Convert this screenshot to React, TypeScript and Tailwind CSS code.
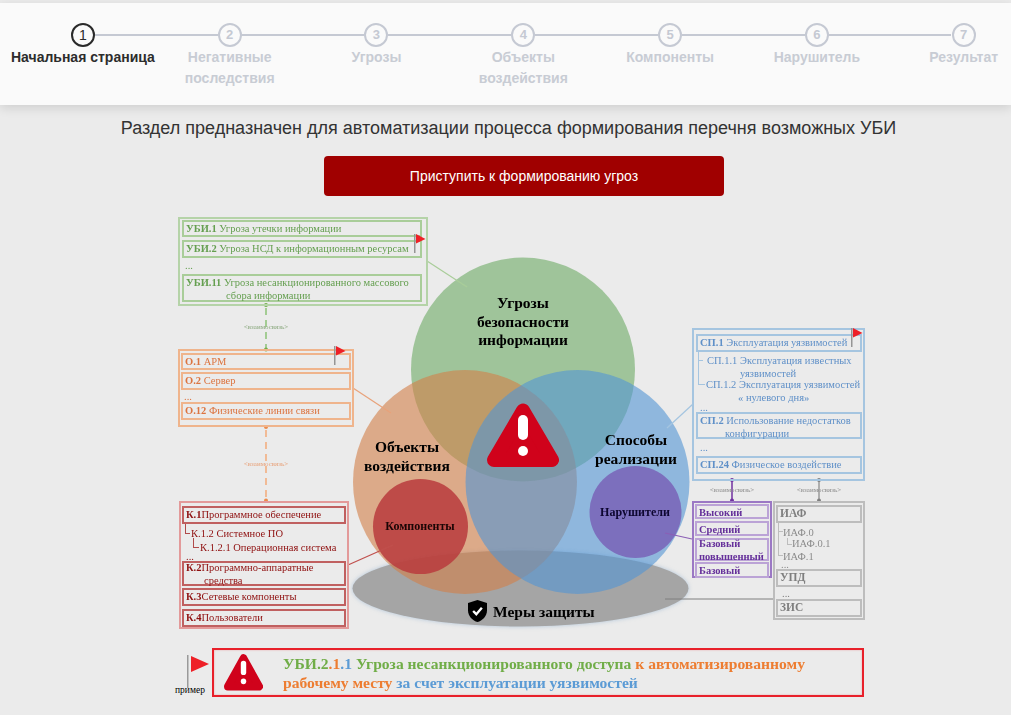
import type { ReactNode } from "react";
import clsx from "clsx";

const steps = [
  ["Начальная страница"],
  ["Негативные", "последствия"],
  ["Угрозы"],
  ["Объекты", "воздействия"],
  ["Компоненты"],
  ["Нарушитель"],
  ["Результат"],
];

function Stepper() {
  return (
    <div className="mt-[3px] h-[102px] bg-[#fafafa] shadow-[0_3px_10px_rgba(0,0,0,0.12)] overflow-hidden relative">
      <div className="grid grid-cols-[repeat(7,146.8px)] w-[1028px] ml-[9.5px] pt-[20px]">
        {steps.map((lines, i) => (
          <div key={i} className="relative flex flex-col items-center">
            {i < 6 && (
              <div className="absolute left-[85px] top-[11px] w-[123px] h-[2px] bg-[#c5c9d3]" />
            )}
            <div
              className={clsx(
                "w-[24px] h-[24px] rounded-full border-2 flex items-center justify-center",
                i === 0 ? "border-[#2a2a2a] text-[#2a2a2a] text-[14px]" : "border-[#c5c9d3] text-[#c5c9d3] text-[13px] font-bold",
              )}
            >
              {i + 1}
            </div>
            <div
              className={clsx(
                "text-[14px] leading-[21px] font-bold text-center whitespace-nowrap",
                i === 0 ? "text-[#2c2c2c]" : "text-[#c8ccd4]",
              )}
            >
              {lines.map((l) => (
                <div key={l}>{l}</div>
              ))}
            </div>
          </div>
        ))}
      </div>
    </div>
  );
}

function AlertIcon({ className }: { className: string }) {
  return (
    <svg viewBox="0 0 72 65" preserveAspectRatio="none" className={className}>
      <path d="M36 7.5 L65 57 H7 Z" fill="#d0021b" stroke="#d0021b" strokeWidth="14" strokeLinejoin="round" />
      <rect x="31" y="12" width="10" height="25" rx="5" fill="#fff" />
      <circle cx="36" cy="48" r="5" fill="#fff" />
    </svg>
  );
}

function Flag({ className }: { className: string }) {
  return (
    <svg viewBox="0 0 12 19" className={clsx("absolute w-[12px] h-[19px]", className)}>
      <rect x="0" y="0" width="1.5" height="19" fill="#959595" />
      <path d="M2 0 L11.5 5 L2 9.5 Z" fill="#ee2027" />
    </svg>
  );
}

function Item({ className, children }: { className: string; children: ReactNode }) {
  return <div className={clsx("border-2 pl-[2px] leading-[13px] whitespace-nowrap", className)}>{children}</div>;
}

function Tiny({ className }: { className: string }) {
  return (
    <div className={clsx("absolute text-[7px] leading-[8px] text-center w-[48px] whitespace-nowrap", className)}>
      {"<взаимосвязь>"}
    </div>
  );
}

function Diagram() {
  return (
    <div className="relative h-[430px] mt-[14px] blur-[0.3px] font-['Liberation_Serif',serif] text-[10.5px]">
      {/* circles, leaders and connectors */}
      <svg viewBox="0 0 1011 430" className="absolute inset-0 w-[1011px] h-[430px]">
        <ellipse cx="520.5" cy="378.5" rx="168" ry="38" fill="#a5a5a5" className="drop-shadow-[0_0_2px_rgba(120,160,200,0.5)]" />
        <circle cx="523" cy="159.5" r="112" fill="#6caa64" fillOpacity="0.6" />
        <circle cx="465" cy="272" r="112" fill="#d27f48" fillOpacity="0.6" />
        <circle cx="577.5" cy="272" r="112" fill="#5294d4" fillOpacity="0.6" />
        <circle cx="420.5" cy="316.5" r="47.5" fill="#b83b3d" fillOpacity="0.85" />
        <circle cx="635.5" cy="302" r="46" fill="#7c6fbd" />

        <line x1="427" y1="51" x2="467" y2="77" stroke="#a9cd99" strokeWidth="1.2" />
        <line x1="353" y1="178" x2="391" y2="203" stroke="#e8a27a" strokeWidth="1.2" />
        <line x1="348" y1="355" x2="393" y2="335" stroke="#c0504d" strokeWidth="1.2" />
        <line x1="693" y1="194" x2="667" y2="218" stroke="#a5c5e0" strokeWidth="1.2" />
        <line x1="665" y1="323" x2="692" y2="329" stroke="#8b5fb5" strokeWidth="1.2" />
        <line x1="665" y1="389" x2="773" y2="389" stroke="#7f7f7f" strokeWidth="1" />

        <line x1="266" y1="98" x2="266" y2="139" stroke="#9cc98a" strokeWidth="1.8" strokeDasharray="7 5" />
        <circle cx="266" cy="95" r="2" fill="#70ad47" />
        <circle cx="266" cy="139.5" r="2" fill="#70ad47" />
        <line x1="266" y1="220" x2="266" y2="290" stroke="#f2b68d" strokeWidth="1.8" strokeDasharray="7 5" />
        <circle cx="266" cy="217" r="2" fill="#ed8b4a" />
        <circle cx="266" cy="290.5" r="2" fill="#ed8b4a" />
        <line x1="732" y1="270" x2="732" y2="291" stroke="#7030a0" strokeWidth="1.5" />
        <circle cx="732" cy="270" r="2" fill="#7030a0" />
        <circle cx="732" cy="290.5" r="2" fill="#7030a0" />
        <line x1="819" y1="270" x2="819" y2="291" stroke="#9a9a9a" strokeWidth="1.5" />
        <circle cx="819" cy="270" r="2" fill="#7f7f7f" />
        <circle cx="819" cy="290.5" r="2" fill="#7f7f7f" />
      </svg>

      <Tiny className="left-[242px] top-[113px] text-[#8aa87e]" />
      <Tiny className="left-[242px] top-[250px] text-[#e8a27a]" />
      <Tiny className="left-[708px] top-[276px] text-[#8c8c8c]" />
      <Tiny className="left-[795px] top-[276px] text-[#8c8c8c]" />

      {/* circle captions */}
      <div className="absolute left-[463px] top-[84px] w-[120px] text-center text-[15.5px] leading-[18.5px] font-bold text-black">
        Угрозы<br />безопасности<br />информации
      </div>
      <div className="absolute left-[357px] top-[227px] w-[100px] text-center text-[15.5px] leading-[19px] font-bold text-black">
        Объекты<br />воздействия
      </div>
      <div className="absolute left-[586px] top-[220px] w-[100px] text-center text-[15.5px] leading-[19px] font-bold text-black">
        Способы<br />реализации
      </div>
      <div className="absolute left-[370px] top-[309px] w-[100px] text-center text-[12px] leading-[14px] font-bold text-[#1a0505]">
        Компоненты
      </div>
      <div className="absolute left-[585px] top-[295px] w-[100px] text-center text-[12px] leading-[14px] font-bold text-[#0d0630]">
        Нарушители
      </div>
      <AlertIcon className="absolute left-[487px] top-[193px] w-[72px] h-[65px]" />
      <div className="absolute left-[468px] top-[389px] flex items-center gap-[6px]">
        <svg viewBox="0 0 24 28" className="w-[19px] h-[24px]">
          <path d="M12 0 L24 4 V13 C24 21 18 26 12 28 C6 26 0 21 0 13 V4 Z" fill="#000" />
          <path d="M6.5 14 L10.5 18 L17.5 10" fill="none" stroke="#fff" strokeWidth="3" />
        </svg>
        <span className="pt-[2px] text-[15.5px] leading-[20px] font-bold text-black whitespace-nowrap">Меры защиты</span>
      </div>

      {/* threats */}
      <div className="absolute left-[178px] top-[7px] w-[250px] h-[89px] border-2 border-[#b5d3a8] pl-[2px] pr-[4px] pt-[1px] text-[#659f50]">
        <Item className="h-[17px] border-[#a9cd99]"><b>УБИ.1</b> Угроза утечки информации</Item>
        <Item className="h-[18px] mt-[3px] border-[#a9cd99]"><b>УБИ.2</b> Угроза НСД к информационным ресурсам</Item>
        <div className="h-[16px] pl-[3px] leading-[15px]">...</div>
        <Item className="h-[28px] border-[#a9cd99]">
          <b>УБИ.11</b> Угроза несанкционированного массового
          <div className="pl-[40px]">сбора информации</div>
        </Item>
      </div>
      <Flag className="left-[414px] top-[24px]" />

      {/* objects */}
      <div className="absolute left-[178px] top-[139px] w-[176px] h-[78px] border-2 border-[#efb48c] px-[1px] pt-[2px] text-[#dc7440]">
        <Item className="h-[17px] border-[#efb48c]"><b>О.1</b> АРМ</Item>
        <Item className="h-[18px] mt-[2px] border-[#efb48c]"><b>О.2</b> Сервер</Item>
        <div className="h-[12px] pl-[3px] leading-[13px]">...</div>
        <Item className="h-[18px] border-[#efb48c]"><b>О.12</b> Физические линии связи</Item>
      </div>
      <Flag className="left-[334px] top-[136px]" />

      {/* components */}
      <div className="absolute left-[179px] top-[291px] w-[170px] h-[128px] border-2 border-[#e39a9a] px-[1px] pt-[3px] text-[#8f1010]">
        <Item className="h-[18px] border-[#c06060]"><b>К.1</b>Программное обеспечение</Item>
        <div className="relative flex flex-col h-[37px] pt-[3px] leading-[13px] whitespace-nowrap">
          <div className="absolute left-[3px] top-0 w-[5px] h-[10px] border-l border-b border-[#b04a4a]" />
          <div className="absolute left-[11px] top-[14px] w-[6px] h-[10px] border-l border-b border-[#b04a4a]" />
          <div className="pl-[9px]">К.1.2 Системное ПО</div>
          <div className="pl-[18px] mt-[1px]">К.1.2.1 Операционная система</div>
          <div className="pl-[4px] mt-[-4px]">...</div>
        </div>
        <Item className="h-[25px] border-[#c06060]">
          <div className="mt-[-2px]">
            <b>К.2</b>Программно-аппаратные
            <div className="pl-[18px]">средства</div>
          </div>
        </Item>
        <Item className="h-[18px] mt-[2px] border-[#c06060]"><b>К.3</b>Сетевые компоненты</Item>
        <Item className="h-[18px] mt-[3px] border-[#c06060]"><b>К.4</b>Пользователи</Item>
      </div>

      {/* methods */}
      <div className="absolute left-[692px] top-[118px] w-[173px] h-[153px] border-2 border-[#a5c5e0] pl-[2px] pr-[1px] pt-[4px] text-[#5f90c8]">
        <Item className="h-[18px] border-[#a5c5e0]"><b>СП.1</b> Эксплуатация уязвимостей</Item>
        <div className="relative flex flex-col h-[60px] pt-[2px] leading-[13px] whitespace-nowrap">
          <div className="absolute left-[2px] top-0 w-[7px] h-[33px] border-l border-b border-[#a5c5e0]" />
          <div className="absolute left-[2px] top-[8px] w-[5px] border-b border-[#a5c5e0]" />
          <div className="pl-[11px]">СП.1.1 Эксплуатация известных</div>
          <div className="pl-[44px]">уязвимостей</div>
          <div className="pl-[10px] mt-[-2px]">СП.1.2 Эксплуатация уязвимостей</div>
          <div className="pl-[42px]">« нулевого дня»</div>
          <div className="pl-[4px] mt-[-3px]">...</div>
        </div>
        <Item className="h-[27px] leading-[12px] border-[#a5c5e0]">
          <b>СП.2</b> Использование недостатков
          <div className="pl-[25px]">конфигурации</div>
        </Item>
        <div className="h-[17px] pl-[4px] leading-[17px]">...</div>
        <Item className="h-[18px] border-[#a5c5e0]"><b>СП.24</b> Физическое воздействие</Item>
      </div>
      <Flag className="left-[851px] top-[118px]" />

      {/* intruders */}
      <div className="absolute left-[692px] top-[291px] w-[80px] h-[77px] border-2 border-[#9b78c4] px-[1px] pt-[1px] text-[#65309a] font-bold">
        <Item className="h-[15px] leading-[10px] border-[#bba3d6]">Высокий</Item>
        <Item className="h-[15px] leading-[10px] mt-[2px] border-[#bba3d6]">Средний</Item>
        <Item className="h-[23px] leading-[12px] mt-[2px] border-[#bba3d6]">
          <div className="mt-[-3px]">Базовый<br />повышенный</div>
        </Item>
        <Item className="h-[16px] leading-[10px] mt-[1px] border-[#bba3d6]">Базовый</Item>
      </div>

      {/* measures */}
      <div className="absolute left-[773px] top-[291px] w-[92px] h-[119px] border-2 border-[#bdbdbd] px-[1px] pt-[2px] text-[#7f7f7f]">
        <Item className="h-[18px] text-[11.5px] border-[#bdbdbd]"><b>ИАФ</b></Item>
        <div className="relative flex flex-col h-[46px] pt-[3px] leading-[13px] whitespace-nowrap text-[#8c8c8c]">
          <div className="absolute left-[2px] top-0 w-[5px] h-[33px] border-l border-b border-[#bdbdbd]" />
          <div className="absolute left-[2px] top-[8px] w-[5px] border-b border-[#bdbdbd]" />
          <div className="absolute left-[11px] top-[15px] w-[5px] h-[7px] border-l border-b border-[#bdbdbd]" />
          <div className="pl-[7px]">ИАФ.0</div>
          <div className="pl-[16px] mt-[-2px]">ИАФ.0.1</div>
          <div className="pl-[7px]">ИАФ.1</div>
          <div className="pl-[5px] h-[3px] leading-[3px]">...</div>
        </div>
        <Item className="h-[18px] text-[11.5px] border-[#bdbdbd]"><b>УПД</b></Item>
        <div className="h-[12px] pl-[6px] leading-[13px]">...</div>
        <Item className="h-[18px] text-[11.5px] border-[#bdbdbd]"><b>ЗИС</b></Item>
      </div>
    </div>
  );
}

function Example() {
  return (
    <div className="flex ml-[174px] mt-[8px] font-['Liberation_Serif',serif]">
      <div className="relative w-[38px] h-[49px]">
        <svg viewBox="0 0 24 33" className="absolute left-[13px] top-[7px] w-[24px] h-[33px]">
          <rect x="0" y="0" width="1.5" height="33" fill="#9a9a9a" />
          <path d="M4 1 L22 9 L4 17 Z" fill="#ee2027" />
        </svg>
        <div className="absolute left-[1px] top-[36px] text-[9.5px] leading-[12px] text-black">пример</div>
      </div>
      <div className="flex items-center w-[652px] h-[49px] pl-[10px] border-2 border-[#e8202a] shadow-[inset_0_0_2px_rgba(232,32,42,0.35)]">
        <AlertIcon className="w-[39px] h-[37px] shrink-0" />
        <div className="ml-[20px] text-[15.6px] leading-[19px] font-bold blur-[0.3px]">
          <span className="text-[#70ad47]">УБИ.2</span>
          <span className="text-[#ed7d31]">.1</span>
          <span className="text-[#5b9bd5]">.1</span>
          <span className="text-[#70ad47]"> Угроза несанкционированного доступа</span>
          <span className="text-[#ed7d31]"> к автоматизированному</span>
          <br />
          <span className="text-[#ed7d31]">рабочему месту</span>
          <span className="text-[#5b9bd5]"> за счет эксплуатации уязвимостей</span>
        </div>
      </div>
    </div>
  );
}

export default function App() {
  return (
    <div className="h-[715px] bg-[#ebebeb] overflow-hidden font-['Liberation_Sans',Arial,sans-serif]">
      <Stepper />
      <h1 className="mt-[11px] pl-[6px] text-center text-[18px] leading-[24px] font-normal text-[#333]">
        Раздел предназначен для автоматизации процесса формирования перечня возможных УБИ
      </h1>
      <button className="block ml-[324px] mt-[16px] w-[400px] h-[40px] rounded-[4px] bg-[#a00000] text-white text-[14px]">
        Приступить к формированию угроз
      </button>
      <Diagram />
      <Example />
    </div>
  );
}
